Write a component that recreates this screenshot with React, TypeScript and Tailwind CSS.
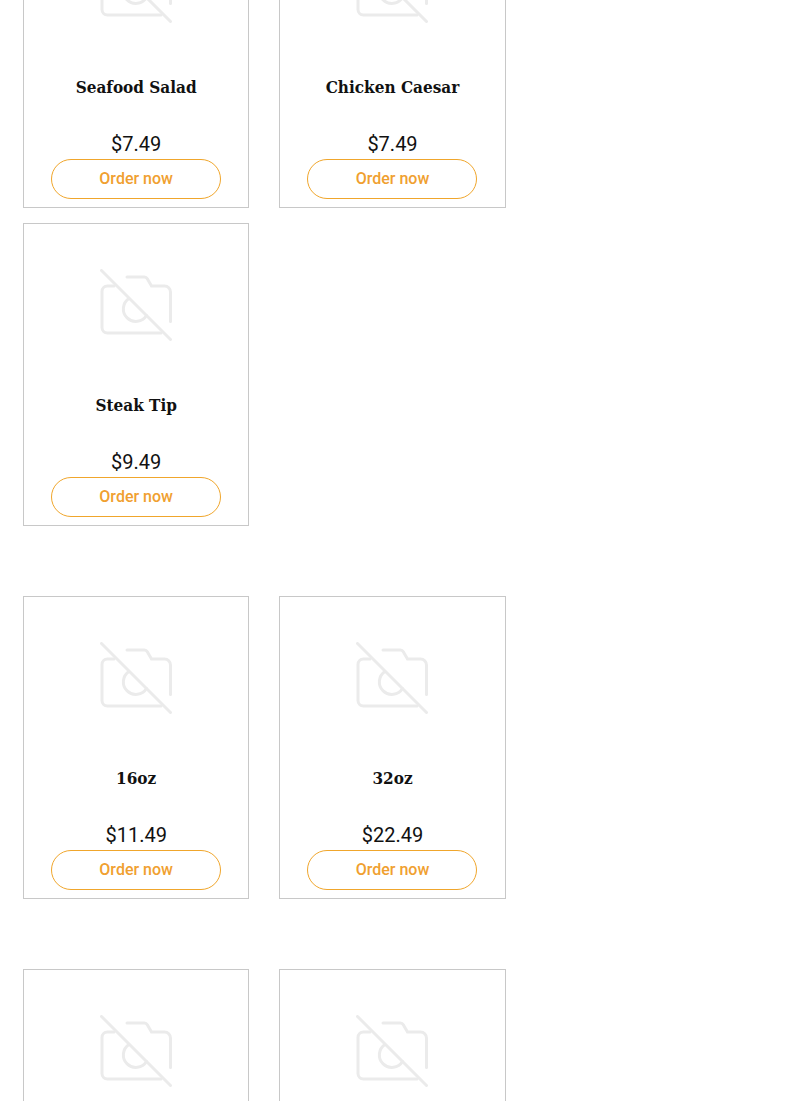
interface MenuItem {
    id: number;
    name?: string;
    price?: string;
}

const sections: { id: string; items: MenuItem[] }[] = [
    {
        id: "salads",
        items: [
            { id: 1, name: "Seafood Salad", price: "$7.49" },
            { id: 2, name: "Chicken Caesar", price: "$7.49" },
            { id: 3, name: "Steak Tip", price: "$9.49" },
        ],
    },
    {
        id: "by-the-ounce",
        items: [
            { id: 4, name: "16oz", price: "$11.49" },
            { id: 5, name: "32oz", price: "$22.49" },
        ],
    },
    {
        id: "more",
        items: [{ id: 6 }, { id: 7 }],
    },
];

function NoPhotoIcon() {
    return (
        <svg
            className="h-[72px] w-[72px]"
            viewBox="0 0 72 72"
            fill="none"
            stroke="#ebebeb"
            strokeWidth="3"
            strokeLinecap="round"
            aria-hidden="true"
        >
            <path d="M1.5 1.5 70.5 70.5" />
            <path d="M14 17H7.5A5.5 5.5 0 0 0 2 22.5V58.5A5.5 5.5 0 0 0 7.5 64H61" />
            <path d="M27 8H44.5c1.5 0 2 .5 2.8 1.8L51.5 17H64.5a6 6 0 0 1 6 6V52.5" />
            <path d="M29 29.5A12.5 12.5 0 1 0 46.5 46.5" />
        </svg>
    );
}

function ItemCard({ item }: { item: MenuItem }) {
    return (
        <article className="flex min-h-[303px] flex-col items-center border border-[#c8c8c8] bg-white px-2 pt-[45px] pb-2">
            <NoPhotoIcon />
            {item.name && (
                <>
                    <h3 className="mt-[52px] text-center font-['DejaVu_Serif_Condensed','DejaVu_Serif',serif] text-[17px] leading-6 font-bold text-[#111111]">
                        {item.name}
                    </h3>
                    <p className="mt-[30px] text-[20px] leading-[30px] text-[#111111]">{item.price}</p>
                    <button
                        type="button"
                        className="h-10 w-[170px] max-w-full rounded-full border border-[#f0a62c] text-[16px] font-medium text-[#f0a030]"
                    >
                        Order now
                    </button>
                </>
            )}
        </article>
    );
}

export default function App() {
    return (
        <div className="h-screen overflow-hidden bg-white font-[Roboto,sans-serif]">
            {/* the first row is partly scrolled past the top edge */}
            <main className="-mt-[95px] flex flex-col gap-[70px] px-[23px]">
                {sections.map((section) => (
                    <section
                        key={section.id}
                        className="grid grid-cols-[repeat(2,calc((100%-60px)/3))] gap-x-[30px] gap-y-[15px]"
                    >
                        {section.items.map((item) => (
                            <ItemCard key={item.id} item={item} />
                        ))}
                    </section>
                ))}
            </main>
        </div>
    );
}
